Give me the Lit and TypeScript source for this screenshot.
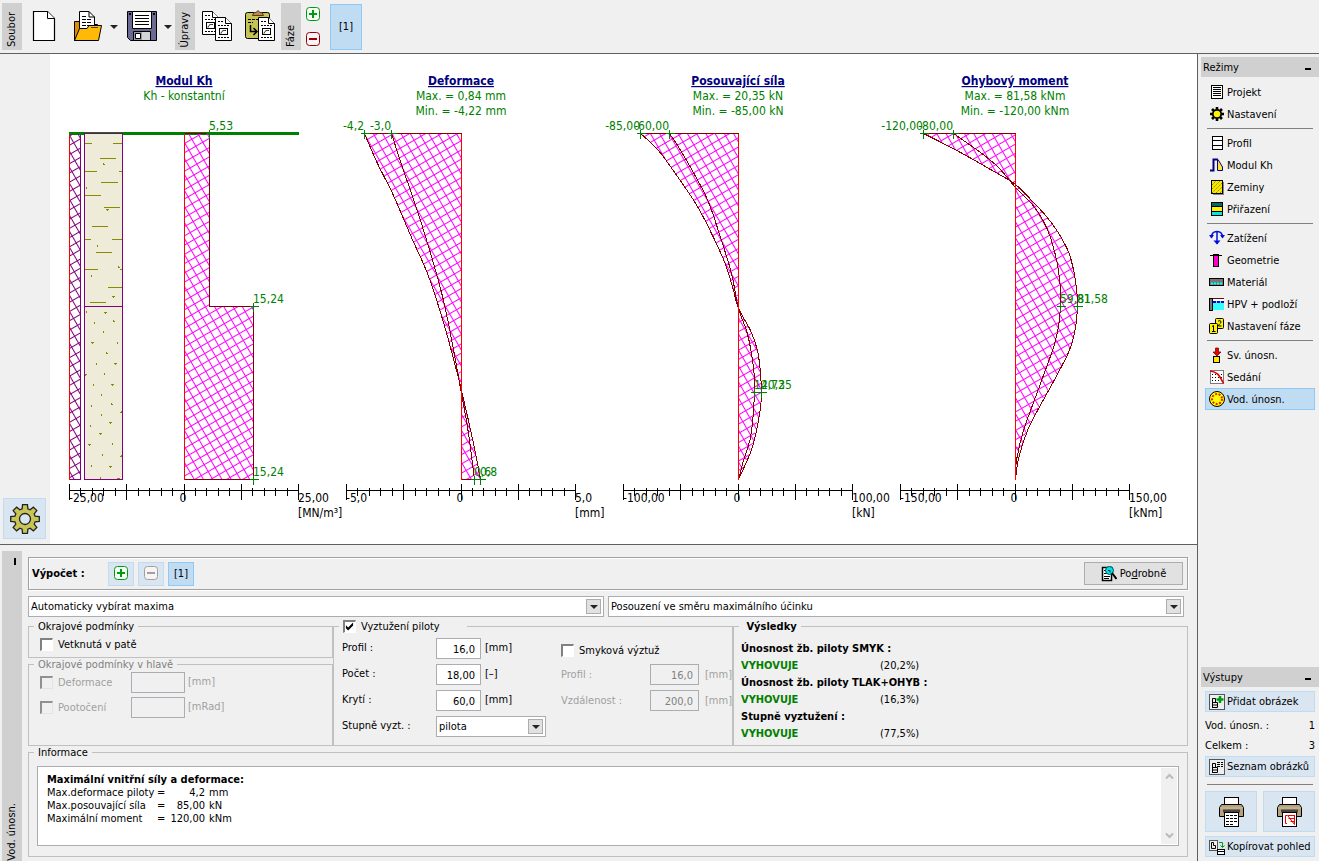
import { LitElement, html, svg, css } from "lit";
import { customElement } from "lit/decorators.js";

type Pt = [number, number];

const TOP = 133;
const BOTTOM = 479;

interface Diagram {
  x: number;
  title: string;
  notes: string[];
  range: string;
  unit: string;
}

const diagrams: Diagram[] = [
  { x: 184, title: "Modul Kh", notes: ["Kh - konstantní"], range: "25,00", unit: "[MN/m³]" },
  { x: 461, title: "Deformace", notes: ["Max. = 0,84 mm", "Min. = -4,22 mm"], range: "5,0", unit: "[mm]" },
  { x: 738, title: "Posouvající síla", notes: ["Max. = 20,35 kN", "Min. = -85,00 kN"], range: "100,00", unit: "[kN]" },
  { x: 1015, title: "Ohybový moment", notes: ["Max. = 81,58 kNm", "Min. = -120,00 kNm"], range: "150,00", unit: "[kNm]" },
];

const curves: { x: number; outer: Pt[]; inner: Pt[] }[] = [
  {
    x: 461,
    outer: [[364, 133], [377, 163], [393, 195], [411, 237], [427, 273], [440, 312], [450, 347], [461, 390], [473, 443], [480, 479]],
    inner: [[391, 133], [402, 167], [420, 220], [443, 300], [461, 393], [468, 433], [474, 479]],
  },
  {
    x: 738,
    outer: [[640, 133], [658, 150], [679, 179], [697, 206], [713, 237], [725, 264], [733, 290], [738, 308], [750, 330], [757, 350], [760, 373], [761, 393], [760, 407], [756, 430], [750, 452], [738, 479]],
    inner: [[669, 133], [682, 153], [706, 197], [720, 237], [731, 273], [738, 308], [746, 330], [751, 353], [754, 380], [753, 410], [750, 437], [743, 460], [738, 479]],
  },
  {
    x: 1015,
    outer: [[923, 133], [933, 138], [960, 152], [990, 169], [1015, 184], [1033, 202], [1046, 216], [1057, 231], [1065, 245], [1070, 257], [1075, 280], [1077, 306], [1074, 333], [1068, 352], [1053, 381], [1037, 410], [1027, 430], [1018, 458], [1015, 479]],
    inner: [[953, 133], [980, 152], [998, 167], [1015, 187], [1031, 203], [1042, 219], [1050, 237], [1058, 270], [1060, 306], [1055, 340], [1040, 383], [1023, 430], [1016, 460], [1015, 479]],
  },
];

const marks: { x: number; y: number; label: string; end?: boolean }[] = [
  { x: 209, y: 133, label: "5,53" },
  { x: 253, y: 306, label: "15,24" },
  { x: 253, y: 479, label: "15,24" },
  { x: 364, y: 133, label: "-4,2", end: true },
  { x: 391, y: 133, label: "-3,0", end: true },
  { x: 474, y: 479, label: "0,6" },
  { x: 480, y: 479, label: "0,8" },
  { x: 640, y: 133, label: "-85,00", end: true },
  { x: 669, y: 133, label: "-60,00", end: true },
  { x: 754, y: 392, label: "14,72" },
  { x: 761, y: 392, label: "20,35" },
  { x: 923, y: 133, label: "-120,00", end: true },
  { x: 953, y: 133, label: "-80,00", end: true },
  { x: 1060, y: 306, label: "59,81" },
  { x: 1077, y: 306, label: "81,58" },
];

/* Soil texture in thirds of a pixel: clay dashes [from, to, y] and grains [x, y]. */
const dashes = [
  [105, 126, 250], [189, 217, 250], [150, 198, 295], [105, 141, 334], [207, 217, 334], [153, 204, 367],
  [105, 153, 406], [162, 210, 442], [126, 174, 499], [105, 123, 538], [186, 217, 538], [138, 186, 577],
  [105, 144, 628], [210, 217, 628], [174, 217, 682], [120, 168, 727],
];
const grains = [
  [161, 313], [109, 385], [172, 450], [142, 558], [207, 622], [124, 648], [190, 710],
  [109, 756], [166, 758], [134, 790], [191, 784], [160, 815], [127, 848], [202, 848], [170, 880], [139, 911],
  [196, 911], [164, 943], [107, 945], [130, 975], [187, 975], [155, 1006], [185, 1033], [124, 1037], [214, 1057],
  [154, 1064], [181, 1089], [121, 1097], [151, 1121], [188, 1153], [118, 1154], [157, 1184], [214, 1189],
  [124, 1217], [181, 1220], [151, 1253], [205, 1256],
];

/* Smooth line through all the points (Catmull-Rom turned into cubic segments). */
const path = (pts: Pt[]) => {
  let d = `M${pts[0].join(" ")}`;
  for (let i = 0; i < pts.length - 1; i++) {
    const p0 = pts[Math.max(i - 1, 0)];
    const p1 = pts[i];
    const p2 = pts[i + 1];
    const p3 = pts[Math.min(i + 2, pts.length - 1)];
    const c = [
      p1[0] + (p2[0] - p0[0]) / 6, p1[1] + (p2[1] - p0[1]) / 6,
      p2[0] - (p3[0] - p1[0]) / 6, p2[1] - (p3[1] - p1[1]) / 6,
      p2[0], p2[1],
    ];
    d += "C" + c.map((v) => v.toFixed(2)).join(" ");
  }
  return d;
};

const axis = (d: Diagram) => {
  const left = d.x - 115;
  const ticks = Array.from({ length: 21 }, (_, i) => {
    const x = Math.round(left + i * 11.45);
    return i % 5 === 0 ? `M${x} 483V499` : `M${x} 487V495`;
  });
  return svg`
    <path class="ink" d="M${left} 490H${left + 229}${ticks.join("")}" />
    <text x=${left} y="502">-${d.range}</text>
    <text x=${d.x - 1} y="502" text-anchor="middle">0</text>
    <text x=${left + 229} y="502">${d.range}</text>
    <text x=${left + 229} y="517">${d.unit}</text>
    <text class="title" x=${d.x} y="85" text-anchor="middle">${d.title}</text>
    ${d.notes.map((n, i) => svg`<text class="note" x=${d.x} y=${100 + 15 * i} text-anchor="middle">${n}</text>`)}
  `;
};

const plus = svg`<rect x=".5" y=".5" width="13" height="13" rx="3" fill="#f6fff6" stroke="#009a10" /><path d="M7 3V11M3 7H11" stroke="#009a10" stroke-width="2" />`;
const minus = (c: string) => svg`<rect x=".5" y=".5" width="13" height="13" rx="3" fill="#f8f4f4" stroke=${c} /><path d="M3 7H11" stroke=${c} stroke-width="2" />`;

const sheet = (x: number, y: number) => svg`
  <g transform="translate(${x} ${y})">
    <path d="M.5.5H10.500L16.500 6.500V23.500H.5Z" fill="#fff" stroke="#000" />
    <path d="M10.500.5V6.500H16.500" fill="#fff" stroke="#000" />
    <path d="M3 4.500H8M3 8.500H14M3 20.500H14" stroke="#000" stroke-dasharray="2 1" />
    <rect x="4.500" y="11.500" width="8" height="6" fill="#fff" stroke="#000" />
    <path d="M6 16.500C7 13 9 13.500 11 13.500" fill="none" stroke="#000" />
  </g>`;

const icons: Record<string, unknown> = {
  file: svg`<path d="M4.500.5H18.500L25.500 7.500V29.500H4.500Z" fill="#fff" stroke="#000" stroke-width="1.2" /><path d="M18.500.5V7.500H25.500" fill="#fff" stroke="#000" />`,
  open: svg`<path d="M1.500 29.500V10.500H8L11 13.500H24.500V29.500Z" fill="#d98f00" stroke="#000" />
    <path d="M6.500.5H16L21.500 6V19H6.500Z" fill="#fff" stroke="#000" /><path d="M16 .5V6H21.500" fill="none" stroke="#000" />
    <path d="M9 5.500H14M9 8.500H19M9 11.500H19M9 14.500H19" stroke="#000" stroke-dasharray="4 1" />
    <path d="M1.500 29.500L6.500 17.500H14L16 14.500H28.500L25.500 29.500Z" fill="#ffba08" stroke="#000" /><path d="M18 16.500H25" stroke="#444" />`,
  save: svg`<path d="M.5.5H29.500V29.500H3.500L.5 26.500Z" fill="#6a6a92" stroke="#000" />
    <path d="M5.500.5H24.500V17.500H5.500Z" fill="#fff" stroke="#000" /><path d="M8 4.500H22M8 7.500H22M8 10.500H22M8 13.500H22" stroke="#000" />
    <path d="M6.500 20.500H23.500V29.500H6.500Z" fill="#d4d4d8" stroke="#000" /><path d="M7 21H15V29H7Z" fill="#9a9aa6" /><path d="M8.500 22.500H13.500V27.500H8.500Z" fill="#fff" stroke="#000" /><path d="M2 3H4M26 3H28" stroke="#000" stroke-width="2" />`,
  copy: svg`${sheet(0, 0)}${sheet(13, 6)}`,
  paste: svg`<rect x=".5" y="1.500" width="24" height="26" rx="2" fill="#c4c455" stroke="#000" /><path d="M7.500 4.500L9 1.500H11L13 -.5L15 1.500H17L18.500 4.500Z" fill="#b98a52" stroke="#5a3a10" />
    <path d="M3 8.500H18M3 11.500H8" stroke="#000" stroke-dasharray="3 1" /><path d="M5.500 14V20.500H11M8.500 17L12 20.500L8.500 24" fill="none" stroke="#000" stroke-width="1.500" />${sheet(13, 6)}`,
  projekt: svg`<rect x="2.500" y="1.500" width="11" height="13" fill="#fff" stroke="#000" /><path d="M4 3.500H12M4 5.500H12M4 7.500H12M4 9.500H12M4 11.500H12" stroke="#000" />`,
  nastaveni: svg`<path d="M8 1V15M1 8H15M3 3L13 13M13 3L3 13" stroke="#000" stroke-width="2.600" /><circle cx="8" cy="8" r="4.200" fill="#fff200" stroke="#000" stroke-width="1.800" />`,
  profil: svg`<rect x="3.500" y="1.500" width="10" height="13" fill="#fff" stroke="#000" /><path d="M3 5.500H14M3 10.500H14" stroke="#000" />`,
  modul: svg`<path d="M1 13.500H4.500V2.500H9" fill="none" stroke="#000080" stroke-width="2" /><path d="M8.500 2.500V13.500H13.500V10L9 2.500" fill="#ffe23a" stroke="#000080" />`,
  zeminy: svg`<rect x="4" y="3" width="11" height="13" fill="#888" /><rect x="2.500" y="1.500" width="11" height="13" fill="#f5e800" stroke="#000" /><path d="M3 6L7 2M3 10L11 2M3 14L13 4M7 14L13 8M11 14L13 12" stroke="#a08000" stroke-dasharray="2 1" />`,
  prirazeni: svg`<rect x="2.500" y="1.500" width="11" height="13" fill="#fff200" stroke="#000" /><path d="M3 3.500H13" stroke="#006a6a" stroke-width="3" /><path d="M3 12.500H13" stroke="#00e5e5" stroke-width="3" /><path d="M3 5.500H13M3 10.500H13" stroke="#000" />`,
  zatizeni: svg`<path d="M2.500 7.500C2.500 3.500 5 1.500 8 1.500S13.500 3.500 13.500 7.500M8 1.500V14" fill="none" stroke="#0010e0" stroke-width="1.500" /><path d="M0 5H5L2.500 8.500ZM11 5H16L13.500 8.500ZM4.500 10.500H11.500L8 14.500Z" fill="#0010e0" />`,
  geometrie: svg`<path d="M1 3.500H13" stroke="#000" /><rect x="4.500" y="2.500" width="5" height="12" fill="#f0c" stroke="#000" /><path d="M4 3.500H10" stroke="#000" />`,
  material: svg`<rect x=".5" y="4.500" width="14" height="7" fill="#777" stroke="#000" /><path d="M2 9.500H13" stroke="#0ff" stroke-width="2" stroke-dasharray="2 1" />`,
  hpv: svg`<rect x="4" y="5" width="11" height="9" fill="#3ff" /><path d="M4 2.500H15" stroke="#800000" /><path d="M4 4H15" stroke="#fff" stroke-width="2" /><path d="M4 6H15" stroke="#00d" stroke-width="2" stroke-dasharray="3 1" /><rect x=".5" y="2.500" width="3" height="12" fill="#777" stroke="#000" />`,
  faze: svg`<rect x="6.500" y=".5" width="8" height="10" rx="1" fill="#fff200" stroke="#000" /><path d="M9 3.500C10 2 12 2.500 12 4C12 5.500 9.500 6 9.500 8H12.500" fill="none" stroke="#000" /><rect x=".5" y="5.500" width="8" height="10" rx="1" fill="#fff200" stroke="#000" /><path d="M3 8.500L4.500 7.500V13.500M3 13.500H6.500" fill="none" stroke="#000" />`,
  svisla: svg`<path d="M6.500 1H9.500V5H12L8 9L4 5H6.500Z" fill="#e00" stroke="#600" stroke-width=".7" /><rect x="4.500" y="9.500" width="6" height="6" fill="#ffe800" stroke="#000" />`,
  sedani: svg`<rect x="1.500" y="1.500" width="13" height="13" fill="#fff" stroke="#000" stroke-dasharray="1 1" /><path d="M3 5.500H14M3 8.500H14M3 11.500H14" stroke="#000" stroke-dasharray="1 2" /><path d="M1 2C8 3 10 5 14.500 14.500" fill="none" stroke="#e00" stroke-width="1.600" />`,
  vodorovna: svg`<circle cx="8" cy="8" r="7.500" fill="#ff0" stroke="#000" /><circle cx="8" cy="8" r="5" fill="none" stroke="#e02000" stroke-width="2" stroke-dasharray="2 1.500" />`,
  addPicture: svg`<rect x=".5" y=".5" width="15" height="15" fill="#eee" stroke="#555" /><path d="M3.500 13.500V4.500H6.500V8.500M3.500 8.500H8.500V13.500H3M3 11H8" fill="none" stroke="#000" /><path d="M11 2V9M7.500 5.500H14.500" stroke="#009a10" stroke-width="2.500" />`,
  listPicture: svg`<rect x=".5" y=".5" width="15" height="15" fill="#eee" stroke="#555" /><path d="M3.500 13.500V4.500H6.500V8.500M3.500 8.500H8.500V13.500H3M3 11H8" fill="none" stroke="#000" /><path d="M8 3.500H14M8 5.500H14M8 7.500H14" stroke="#000" stroke-dasharray="3 1" />`,
  copyView: svg`<rect x=".5" y="1.500" width="8" height="10" fill="#eee" stroke="#555" /><path d="M2.500 9.500V3.500H4.500V6.500H6.500V9.500Z" fill="none" stroke="#000" /><path d="M10 3.500H13.500V8M11.500 6.500L13.500 8.500L15.500 6.500" fill="none" stroke="#009a10" /><rect x="8.500" y="10.500" width="7" height="5" fill="#fff" stroke="#000" /><path d="M9 12.500H15" stroke="#000" />`,
  detail: svg`<rect x="1.500" y="1.500" width="9" height="13" fill="#fff" stroke="#000" stroke-width="1.500" /><path d="M3 4.500H5M3 7.500H6M3 10.500H9M3 12.500H8" stroke="#000" /><circle cx="8.500" cy="4.500" r="4" fill="#00e0e8" stroke="#055" /><path d="M11 7L15.500 13" stroke="#000" stroke-width="2" /><path d="M7 4.500H9V6.500" fill="none" stroke="#033" />`,
};

const printer = (page: unknown) => svg`
  <rect x="6.500" y="1.500" width="14" height="10" fill="#fff" stroke="#000" />
  <path d="M3.500 8.500H23.500L25.500 11.500V20.500H1.500V11.500Z" fill="#b5a27c" stroke="#000" />
  <path d="M2 12H25" stroke="#d0c09c" /><path d="M5 15H22" stroke="#444" stroke-width="3" />
  <rect x="6.500" y="16.500" width="14" height="14" fill="#fff" stroke="#000" />${page}`;

const icon = (name: string, cls = "i16", box = "0 0 16 16") =>
  html`<svg class=${cls} viewBox=${box} aria-hidden="true">${icons[name]}</svg>`;

const gear = (() => {
  const pts: string[] = [];
  for (let i = 0; i < 8; i++) {
    const a = (i * Math.PI) / 4;
    for (const [da, r] of [[-0.28, 10.5], [-0.17, 14.5], [0.17, 14.5], [0.28, 10.5]]) {
      pts.push(`${(16 + r * Math.sin(a + da)).toFixed(2)} ${(16 - r * Math.cos(a + da)).toFixed(2)}`);
    }
  }
  return "M" + pts.join("L") + "Z";
})();

const modes: [string, string][][] = [
  [["projekt", "Projekt"], ["nastaveni", "Nastavení"]],
  [["profil", "Profil"], ["modul", "Modul Kh"], ["zeminy", "Zeminy"], ["prirazeni", "Přiřazení"]],
  [["zatizeni", "Zatížení"], ["geometrie", "Geometrie"], ["material", "Materiál"], ["hpv", "HPV + podloží"], ["faze", "Nastavení fáze"]],
  [["svisla", "Sv. únosn."], ["sedani", "Sedání"], ["vodorovna", "Vod. únosn."]],
];

const results: [string, string][] = [
  ["Únosnost žb. piloty SMYK :", "(20,2%)"],
  ["Únosnost žb. piloty TLAK+OHYB :", "(16,3%)"],
  ["Stupně vyztužení :", "(77,5%)"],
];

@customElement("app-root")
export class AppRoot extends LitElement {
  static styles = css`
    :host {
      display: flex;
      flex-direction: column;
      height: 100vh;
      background: #f0f0f0;
      color: #000;
      font: 11px/13px "DejaVu Sans Condensed", "DejaVu Sans", sans-serif;
      overflow: hidden;
    }
    * { box-sizing: border-box; }
    button, input, select { font: inherit; color: inherit; margin: 0; border-radius: 0; }
    button { padding: 0; border: 0; background: none; display: flex; align-items: center; justify-content: center; }
    svg { display: block; flex: none; }
    .i16 { width: 16px; height: 16px; }
    .i15 { width: 15px; height: 15px; }
    .i30 { width: 30px; height: 31px; overflow: visible; }
    .arrow { width: 0; height: 0; border: 4px solid transparent; border-top-color: #222; border-bottom: 0; }

    .toolbar { display: flex; align-items: center; height: 54px; padding: 0 2px; border-bottom: 1px solid #606060; flex: none; }
    .caption { width: 20px; height: 47px; padding-bottom: 3px; background: #d0d0d0; display: flex; align-items: flex-end; justify-content: center; }
    .vertical { writing-mode: vertical-rl; transform: rotate(180deg); white-space: nowrap; line-height: 20px; }
    .tools { display: flex; align-items: center; }
    .tools-file { gap: 9px; padding: 0 3px 0 7px; }
    .new { padding-right: 5px; }
    .tools-edit { gap: 13px; padding: 0 6px 0 7px; }
    .phase { display: flex; flex-direction: column; gap: 10px; padding: 0 9px 0 5px; }
    .stage { width: 32px; height: 46px; background: #c0dcf3; border: 1px solid #90c8f6; }
    .split { display: flex; align-items: center; gap: 7px; }

    .work { flex: 1; display: flex; min-height: 0; }
    .main { flex: 1; min-width: 0; display: flex; flex-direction: column; }
    .desktop { flex: 1; min-height: 0; display: flex; border-bottom: 1px solid #606060; background: #fff; }
    .rail { width: 50px; background: #f0f0f0; display: flex; flex-direction: column; justify-content: flex-end; padding: 0 4px 5px 3px; flex: none; }
    .gear { width: 43px; height: 41px; background: #d9e6f2; border: 1px solid #bfdcf3; }
    .gear svg { width: 32px; height: 32px; }
    .plot { flex: 1; min-width: 0; height: 100%; font-size: 12px; }
    .ink { fill: none; stroke: #000; transform: translate(0.5px, 0.5px); }
    .line { fill: none; stroke: #800000; transform: translate(0.5px, 0.5px); }
    .zero { fill: none; stroke: #f00; transform: translate(0.5px, 0.5px); }
    .soil { stroke: #800080; fill: none; transform: translate(0.5px, 0.5px); }
    .mark { stroke: #008000; fill: none; transform: translate(0.5px, 0.5px); }
    .note { fill: #008000; }
    .title { fill: #000080; font-weight: bold; text-decoration: underline; }

    .frame { display: flex; flex: none; padding: 6px 9px 4px 2px; gap: 6px; height: 316px; }
    .tab { width: 20px; background: #d0d0d0; display: flex; flex-direction: column; justify-content: space-between; align-items: center; padding-top: 7px; margin-bottom: -4px; flex: none; }
    .tick { width: 2px; height: 7px; margin-left: 6px; background: #000; }
    .body { flex: 1; min-width: 0; display: flex; flex-direction: column; padding-top: 6px; }
    .calc { height: 33px; border: 1px solid #a0a0a0; box-shadow: inset 1px 1px #fff, 1px 1px #fff; display: flex; align-items: center; gap: 4px; padding: 0 4px 0 3px; flex: none; }
    .calc-name { width: 72px; font-weight: bold; }
    .square { width: 26px; height: 24px; background: #d9e6f2; border: 1px solid #bfdcf3; }
    .square.on { background: #c0dcf3; border-color: #90c8f6; }
    .more { margin-left: auto; width: 99px; height: 23px; gap: 3px; background: #e1e1e1; border: 1px solid #adadad; }
    .choices { display: grid; grid-template-columns: 1fr 1fr; gap: 4px; padding: 6px 4px 3px 0; }
    .combo { position: relative; display: block; }
    .combo select { appearance: none; width: 100%; height: 21px; border: 1px solid #abadb3; background: #fff; padding: 0 2px; display: block; }
    .combo .knob { position: absolute; right: 3px; top: 3px; width: 15px; height: 15px; border: 1px solid #adadad; background: #e1e1e1; display: flex; align-items: center; justify-content: center; pointer-events: none; }

    fieldset { margin: 0; min-width: 0; border: 1px solid #c0c0c0; padding: 0; }
    legend { margin-left: 5px; padding: 0 4px; height: 13px; }
    .panels { display: grid; grid-template-columns: 305px 400px 1fr; height: 126px; flex: none; }
    .stack { display: flex; flex-direction: column; }
    .stack .ends { height: 38px; }
    .stack .head { flex: 1; color: #808080; }
    .check { display: flex; align-items: center; gap: 5px; }
    .box { appearance: none; width: 13px; height: 13px; background: #fff; border: solid; border-width: 2px 1px 1px 2px; border-color: #808080 #fff #fff #808080; display: flex; flex: none; }
    .box:disabled { background: #f0f0f0; border-color: #909090 #e3e3e3 #e3e3e3 #909090; }
    .box:checked::before { content: ""; width: 9px; height: 9px; background: #000; clip-path: polygon(10% 35%, 35% 60%, 90% 5%, 90% 40%, 35% 95%, 10% 70%); }
    .ends .check { padding: 5px 0 0 11px; }
    .head-grid { display: grid; grid-template-columns: 91px 54px 1fr; grid-auto-rows: 21px; row-gap: 4px; column-gap: 0; padding: 1px 0 0 11px; color: #a0a0a0; }
    .head-grid .unit { padding: 3px 0 0 3px; }
    .num { width: 100%; height: 21px; background: #fff; border: 1px solid #abadb3; padding: 1px 5px 0 2px; text-align: right; }
    .num:disabled { background: #f0f0f0; color: #808080; }
    .steel { display: flex; padding-top: 5px; gap: 19px; padding-left: 8px; }
    .bars { display: grid; grid-template-columns: 94px 45px 61px; row-gap: 5px; grid-auto-rows: 21px; }
    .bars .wide { grid-column: 2 / 4; width: 110px; }
    .bars label { padding-top: 3px; }
    .bars .unit { padding: 3px 0 0 4px; }
    .shear { display: grid; grid-template-columns: 89px 49px 1fr; row-gap: 5px; grid-auto-rows: 21px; color: #a0a0a0; }
    .shear .check { grid-column: 1 / 4; color: #000; padding-top: 4px; }
    .shear label { padding-top: 4px; }
    .shear .check label { padding: 0; }
    .shear .unit { padding: 4px 0 0 6px; }
    .legend-check { width: 128px; }
    .verdicts { padding: 9px 0 0 7px; display: grid; grid-template-columns: 139px 1fr; row-gap: 4px; }
    .strong { font-weight: bold; }
    .verdicts .strong { grid-column: 1 / 3; }
    .ok { color: #008000; font-weight: bold; }

    .info { flex: 1; }
    .info-area { padding: 7px 8px 0; }
    .log { height: 80px; background: #fff; border: 1px solid #abadb3; display: flex; justify-content: space-between; }
    .log-text { padding: 6px 0 0 9px; }
    table { border-collapse: collapse; }
    caption { font-weight: bold; text-align: left; white-space: nowrap; }
    th, td { padding: 0; font-weight: normal; text-align: left; white-space: nowrap; }
    th { width: 110px; }
    td.value { width: 36px; text-align: right; }
    td.unit { padding-left: 4px; }
    .scroll { width: 16px; margin: 1px; background: #f0f0f0; display: flex; flex-direction: column; justify-content: space-between; align-items: center; padding: 5px 0; }
    .scroll svg { width: 9px; height: 7px; }

    .side { width: 122px; flex: none; border-left: 1px solid #606060; display: flex; flex-direction: column; justify-content: space-between; padding: 3px 0 4px 3px; }
    .side-head { height: 20px; background: #d0d0d0; display: flex; align-items: center; justify-content: space-between; padding: 0 8px 0 2px; margin-bottom: 4px; }
    .dash { width: 6px; height: 2px; background: #000; margin-top: 4px; }
    .modes { padding: 0 4px; display: flex; flex-direction: column; }
    .mode { height: 22px; display: flex; align-items: center; justify-content: flex-start; gap: 2px; padding-left: 3px; border: 1px solid transparent; white-space: nowrap; }
    .mode.on { background: #c0dcf3; border-color: #90c8f6; }
    .rule { height: 1px; background: #808080; margin: 3px 2px; border: 0; }
    .outputs { padding: 0 4px; display: flex; flex-direction: column; }
    .wide-btn { height: 21px; background: #d9e6f2; border: 1px solid #bfdcf3; justify-content: flex-start; gap: 2px; padding-left: 3px; white-space: nowrap; }
    .count { display: flex; justify-content: space-between; line-height: 20px; }
    .counts { padding: 4px 0 0; }
    .outputs .rule { margin: 7px 2px 6px; }
    .prints { display: grid; grid-template-columns: 1fr 1fr; gap: 6px; margin-bottom: 4px; }
    .print { height: 41px; background: #d9e6f2; border: 1px solid #bfdcf3; }
    .print svg { width: 27px; height: 32px; }
  `;

  private plot() {
    return html`<svg class="plot" viewBox="50 54 1147 490" preserveAspectRatio="xMinYMin meet" role="img" aria-label="Diagramy piloty">
      <defs>
        <pattern id="hatch" width="8" height="8" patternUnits="userSpaceOnUse" patternTransform="rotate(-30)">
          <path d="M0 .5H8M.5 0V8" stroke="#f0f" fill="none" />
        </pattern>
        <pattern id="hatch-pile" width="8" height="8" patternUnits="userSpaceOnUse" patternTransform="rotate(-30)">
          <path d="M0 .5H8M.5 0V8" stroke="#800080" fill="none" />
        </pattern>
      </defs>
      <g shape-rendering="crispEdges">
        <rect x="69" y="132" width="230" height="3" fill="#008000" />
        <rect x="70" y="134" width="11" height="345" fill="url(#hatch-pile)" />
        <rect x="84" y="133" width="39" height="346" fill="#eeecd8" />
        <g transform="translate(50 60) scale(.33333)" stroke="#8a8a00" stroke-width="3" fill="#8a8a00">
          ${dashes.map(([a, b, y]) => svg`<path d="M${a} ${y}H${b}" />`)}
          ${grains.map(([x, y], i) => svg`<path d=${i % 2 ? `M${x} ${y - 3}v6` : `M${x - 3} ${y}h7m-4 -3v6`} />`)}
        </g>
        <path class="soil" d="M69 479H80V134M84 133H122V479H84ZM84 306H122" />
        <path class="zero" d="M69 134V479" />
        <path fill="url(#hatch)" d="M184 134H209V306H253V479H184Z" />
        <path class="line" d="M184 133H209V306H253V479H184" />
        <path class="zero" d="M184 133V479" />
        ${curves.map(
          (c) => svg`
            <path fill="url(#hatch)" d="${path(c.outer)}L${c.x} ${BOTTOM}V${TOP}Z" />
            <path class="line" d="${path(c.outer)}H${c.x}M${c.outer[0][0]} ${TOP}H${c.x}${path(c.inner)}" />
            <path class="zero" d="M${c.x} ${TOP}V${BOTTOM}" />`
        )}
        ${marks.map((m) => svg`<path class="mark" d="M${m.x - 4} ${m.y}h9M${m.x} ${m.y - 4}v9" />`)}
      </g>
      ${marks.map((m) => svg`<text class="note" x=${m.x} y=${m.y - 3} text-anchor=${m.end ? "end" : "start"}>${m.label}</text>`)}
      <g shape-rendering="crispEdges">${diagrams.map(axis)}</g>
    </svg>`;
  }

  private knob() {
    return html`<span class="knob"><span class="arrow"></span></span>`;
  }

  render() {
    return html`
      <header class="toolbar">
        <span class="caption"><span class="vertical">Soubor</span></span>
        <div class="tools tools-file">
          <button class="new" aria-label="Nový">${icon("file", "i30", "0 0 30 31")}</button>
          <div class="split">
            <button aria-label="Otevřít">${icon("open", "i30", "0 0 30 31")}</button>
            <button aria-label="Naposledy otevřené"><span class="arrow"></span></button>
          </div>
          <div class="split">
            <button aria-label="Uložit">${icon("save", "i30", "0 0 30 31")}</button>
            <button aria-label="Uložit jako"><span class="arrow"></span></button>
          </div>
        </div>
        <span class="caption"><span class="vertical">Úpravy</span></span>
        <div class="tools tools-edit">
          <button aria-label="Kopírovat">${icon("copy", "i30", "0 0 30 31")}</button>
          <button aria-label="Vložit">${icon("paste", "i30", "0 0 30 31")}</button>
        </div>
        <span class="caption"><span class="vertical">Fáze</span></span>
        <div class="phase">
          <button aria-label="Přidat fázi"><svg class="i15" viewBox="0 0 15 15">${plus}</svg></button>
          <button aria-label="Odebrat fázi"><svg class="i15" viewBox="0 0 15 15">${minus("#980008")}</svg></button>
        </div>
        <button class="stage">[1]</button>
      </header>

      <div class="work">
        <main class="main">
          <section class="desktop">
            <div class="rail">
              <button class="gear" aria-label="Nastavení kreslení">
                <svg viewBox="0 0 32 32"><path d=${gear} fill="#c8c455" stroke="#222" stroke-width="1.3" /><circle cx="16" cy="16" r="5.500" fill="#d9e6f2" stroke="#222" stroke-width="1.3" /></svg>
              </button>
            </div>
            ${this.plot()}
          </section>

          <section class="frame">
            <div class="tab"><span class="tick"></span><span class="vertical">Vod. únosn.</span></div>
            <div class="body">
              <div class="calc">
                <span class="calc-name">Výpočet :</span>
                <button class="square" aria-label="Přidat výpočet"><svg class="i15" viewBox="0 0 15 15">${plus}</svg></button>
                <button class="square" aria-label="Odebrat výpočet" disabled><svg class="i15" viewBox="0 0 15 15">${minus("#a0a0a0")}</svg></button>
                <button class="square on">[1]</button>
                <button class="more">${icon("detail")}<span>Po<u>d</u>robně</span></button>
              </div>

              <div class="choices">
                <span class="combo"><select aria-label="Způsob výpočtu"><option>Automaticky vybírat maxima</option></select>${this.knob()}</span>
                <span class="combo"><select aria-label="Směr posouzení"><option>Posouzení ve směru maximálního účinku</option></select>${this.knob()}</span>
              </div>

              <div class="panels">
                <div class="stack">
                  <fieldset class="ends">
                    <legend>Okrajové podmínky</legend>
                    <div class="check"><input class="box" type="checkbox" id="toe" /><label for="toe">Vetknutá v patě</label></div>
                  </fieldset>
                  <fieldset class="head">
                    <legend>Okrajové podmínky v hlavě</legend>
                    <div class="head-grid">
                      <div class="check"><input class="box" type="checkbox" id="def" disabled /><label for="def">Deformace</label></div>
                      <input class="num" aria-label="Deformace v hlavě" disabled /><span class="unit">[mm]</span>
                      <div class="check"><input class="box" type="checkbox" id="rot" disabled /><label for="rot">Pootočení</label></div>
                      <input class="num" aria-label="Pootočení v hlavě" disabled /><span class="unit">[mRad]</span>
                    </div>
                  </fieldset>
                </div>

                <fieldset>
                  <legend class="check legend-check"><input class="box" type="checkbox" id="steel" checked /><label for="steel">Vyztužení piloty</label></legend>
                  <div class="steel">
                    <div class="bars">
                      <label for="dia">Profil :</label><input class="num" id="dia" .value=${"16,0"} /><span class="unit">[mm]</span>
                      <label for="cnt">Počet :</label><input class="num" id="cnt" .value=${"18,00"} /><span class="unit">[–]</span>
                      <label for="cov">Krytí :</label><input class="num" id="cov" .value=${"60,0"} /><span class="unit">[mm]</span>
                      <label for="deg">Stupně vyzt. :</label>
                      <span class="combo wide"><select id="deg"><option>pilota</option></select>${this.knob()}</span>
                    </div>
                    <div class="shear">
                      <div class="check"><input class="box" type="checkbox" id="shear" /><label for="shear">Smyková výztuž</label></div>
                      <label for="sdia">Profil :</label><input class="num" id="sdia" .value=${"16,0"} disabled /><span class="unit">[mm]</span>
                      <label for="dist">Vzdálenost :</label><input class="num" id="dist" .value=${"200,0"} disabled /><span class="unit">[mm]</span>
                    </div>
                  </div>
                </fieldset>

                <fieldset>
                  <legend class="strong">&nbsp;Výsledky</legend>
                  <div class="verdicts">
                    ${results.map(([name, ratio]) => html`<span class="strong">${name}</span><span class="ok">VYHOVUJE</span><span>${ratio}</span>`)}
                  </div>
                </fieldset>
              </div>

              <fieldset class="info">
                <legend>Informace</legend>
                <div class="info-area">
                  <div class="log">
                    <div class="log-text">
                      <table>
                        <caption>Maximální vnitřní síly a deformace:</caption>
                        <tr><th scope="row">Max.deformace piloty</th><td>=</td><td class="value">4,2</td><td class="unit">mm</td></tr>
                        <tr><th scope="row">Max.posouvající síla</th><td>=</td><td class="value">85,00</td><td class="unit">kN</td></tr>
                        <tr><th scope="row">Maximální moment</th><td>=</td><td class="value">120,00</td><td class="unit">kNm</td></tr>
                      </table>
                    </div>
                    <div class="scroll">
                      <svg viewBox="0 0 9 7"><path d="M1 5.500L4.500 2L8 5.500" fill="none" stroke="#bbb" stroke-width="2" /></svg>
                      <svg viewBox="0 0 9 7"><path d="M1 1.500L4.500 5L8 1.500" fill="none" stroke="#bbb" stroke-width="2" /></svg>
                    </div>
                  </div>
                </div>
              </fieldset>
            </div>
          </section>
        </main>

        <aside class="side">
          <div>
            <div class="side-head"><span>Režimy</span><span class="dash"></span></div>
            <nav class="modes">
              ${modes.map(
                (group, i) => html`${i ? html`<hr class="rule" />` : ""}${group.map(
                  ([name, label]) => html`<button class="mode ${name === "vodorovna" ? "on" : ""}">${icon(name)}<span>${label}</span></button>`
                )}`
              )}
            </nav>
          </div>
          <div>
            <div class="side-head"><span>Výstupy</span><span class="dash"></span></div>
            <div class="outputs">
              <button class="wide-btn">${icon("addPicture")}<span>Přidat obrázek</span></button>
              <div class="counts">
                <div class="count"><span>Vod. únosn. :</span><span>1</span></div>
                <div class="count"><span>Celkem :</span><span>3</span></div>
              </div>
              <button class="wide-btn">${icon("listPicture")}<span>Seznam obrázků</span></button>
              <hr class="rule" />
              <div class="prints">
                <button class="print" aria-label="Tisk protokolu"><svg viewBox="0 0 27 32">${printer(svg`<path d="M8 19.500H19M8 22.500H19M8 25.500H19M8 28.500H16" stroke="#000" stroke-dasharray="3 1" />`)}</svg></button>
                <button class="print" aria-label="Tisk obrázku"><svg viewBox="0 0 27 32">${printer(svg`<path d="M11.500 19.500H9.500V27.500H11M11.500 19.500H18.500M12.500 22.500H18.500M14.500 25.500H18.500M18.500 19V28.500L12 20" fill="none" stroke="#e00" />`)}</svg></button>
              </div>
              <button class="wide-btn">${icon("copyView")}<span>Kopírovat pohled</span></button>
            </div>
          </div>
        </aside>
      </div>
    `;
  }
}
